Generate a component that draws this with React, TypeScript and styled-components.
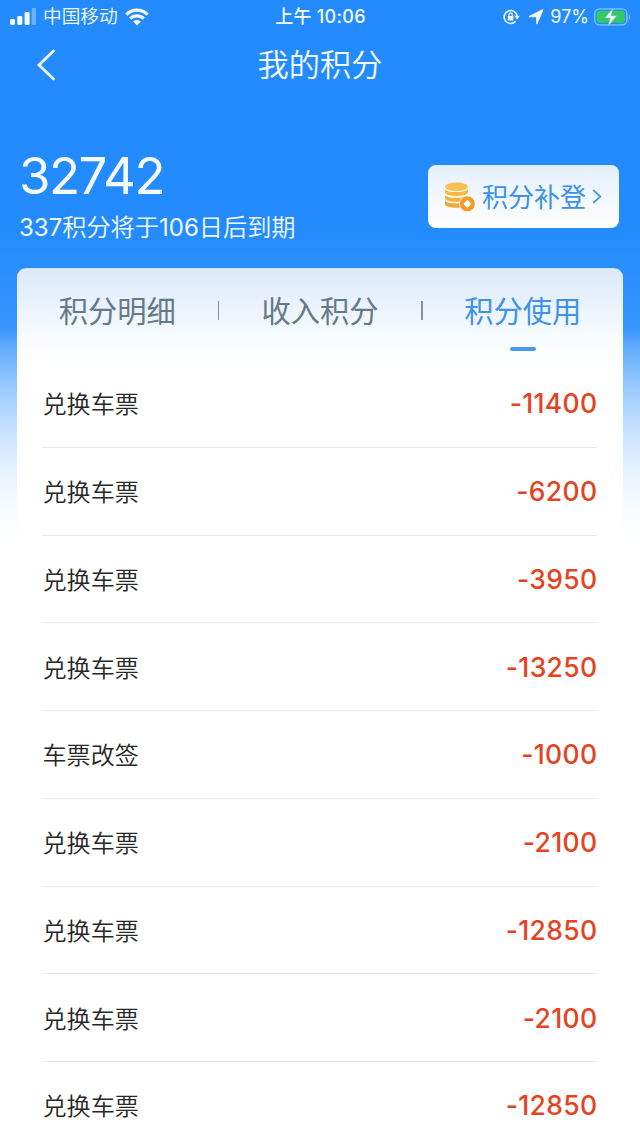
import React from 'react';
import styled, { createGlobalStyle } from 'styled-components';

const GlobalStyle = createGlobalStyle`
  * { box-sizing: border-box; }
  body {
    margin: 0;
    background: #fff;
    font-family: Inter, "Noto Sans CJK SC", sans-serif;
    overflow: hidden;
  }
`;

const Screen = styled.div`
  width: 640px;
  height: 1138px;
  overflow: hidden;
  display: flex;
  flex-direction: column;
  background: linear-gradient(
    180deg,
    #238bfd 0,
    #238bfd 225px,
    #2e91fe 290px,
    #3795fe 328px,
    #67affd 350px,
    #96c8fe 385px,
    #c3dffe 425px,
    #e6f2fe 470px,
    #f8fbff 510px,
    #fff 545px
  );
`;

const StatusBar = styled.header`
  height: 32px;
  flex: none;
  display: grid;
  grid-template-columns: 1fr auto 1fr;
  align-items: center;
  padding: 0 9px 0 10px;
  color: #f4fbff;
`;

const StatusGroup = styled.div<{ $end?: boolean }>`
  display: flex;
  align-items: center;
  height: 32px;
  justify-content: ${(p) => (p.$end ? 'flex-end' : 'flex-start')};
`;

const Carrier = styled.span`
  margin: 0 7px 0 7px;
  font-size: 18.7px;
  font-weight: 350;
  line-height: 32px;
  padding-top: 1px;
`;

const Clock = styled.div`
  font-size: 18px;
  font-weight: 500;
  line-height: 32px;
  padding-top: 1px;
  letter-spacing: 0.3px;
`;

const BatteryLevel = styled.span`
  margin: 0 5px 0 6px;
  font-size: 18px;
  font-weight: 400;
  line-height: 32px;
`;

const NavBar = styled.nav`
  height: 68px;
  flex: none;
  display: grid;
  grid-template-columns: 80px 1fr 80px;
  align-items: center;
  padding-bottom: 2px;
`;

const BackButton = styled.button`
  display: flex;
  padding: 0 0 0 36px;
  border: 0;
  background: none;
`;

const Title = styled.h1`
  margin: 0;
  text-align: center;
  color: #f4fbff;
  font-size: 31.2px;
  font-weight: 350;
  line-height: 46px;
`;

const Summary = styled.section`
  height: 168px;
  flex: none;
  display: flex;
  justify-content: space-between;
  align-items: flex-start;
  padding: 46px 21px 0 19px;
  color: #f4fbff;
`;

const Points = styled.div`
  font-size: 51px;
  line-height: 60px;
  letter-spacing: -1.5px;
`;

const Expiry = styled.div`
  margin-top: 4px;
  font-size: 24.2px;
  font-weight: 350;
  line-height: 36px;
`;

const Figure = styled.span`
  font-weight: 400;
  font-size: 24px;
`;

const ClaimButton = styled.button`
  width: 191px;
  height: 63px;
  margin-top: 19px;
  padding: 0 15px 0 16px;
  display: flex;
  align-items: center;
  border: 0;
  border-radius: 8px;
  background: linear-gradient(180deg, #e4effd, #fff);
  color: #3c92e8;
  font: 400 26px/38px Inter, "Noto Sans CJK SC", sans-serif;
`;

const ClaimLabel = styled.span`
  margin: 0 6px 0 6px;
  padding-top: 2px;
  white-space: nowrap;
`;

const Card = styled.main`
  flex: 1;
  margin: 0 17px;
  border-radius: 9px 9px 0 0;
  border-top: 1px solid #c9e6ff;
  background: linear-gradient(180deg, #dce9f9 0, #ecf4fd 42px, #fafdff 74px, #fff 100px);
`;

const Tabs = styled.div`
  height: 91px;
  display: grid;
  grid-template-columns: 200.5px 1.5px 202px 1.5px 200.5px;
  padding-top: 20px;
`;

const Tab = styled.div<{ $active?: boolean }>`
  display: flex;
  flex-direction: column;
  align-items: center;
  color: ${(p) => (p.$active ? '#3d93ed' : '#657986')};
  font-size: 29.3px;
  line-height: 46px;

  &::after {
    content: '';
    width: 26px;
    height: 4px;
    margin-top: 12px;
    border-radius: 2px;
    background: ${(p) => (p.$active ? '#4a99e6' : 'transparent')};
  }
`;

const Divider = styled.span`
  height: 19px;
  margin-top: 12px;
  background: #83919c;
`;

const List = styled.ul`
  margin: 0;
  padding: 0 26px 0 25px;
  list-style: none;
`;

const Row = styled.li`
  height: 87.75px;
  display: flex;
  align-items: center;
  justify-content: space-between;
  border-bottom: 1px solid #e8e8e8;
`;

const Name = styled.span`
  padding: 4px 0 0 0.5px;
  color: #282828;
  font-size: 24.1px;
  font-weight: 350;
  line-height: 36px;
`;

const Amount = styled.span`
  margin-right: -0.3px;
  color: #e5431f;
  font-size: 26.5px;
  font-weight: 500;
  line-height: 36px;
  letter-spacing: 0.3px;
`;

const records = [
  { name: '兑换车票', amount: -11400 },
  { name: '兑换车票', amount: -6200 },
  { name: '兑换车票', amount: -3950 },
  { name: '兑换车票', amount: -13250 },
  { name: '车票改签', amount: -1000 },
  { name: '兑换车票', amount: -2100 },
  { name: '兑换车票', amount: -12850 },
  { name: '兑换车票', amount: -2100 },
  { name: '兑换车票', amount: -12850 },
];

const SignalIcon = () => (
  <svg width="26" height="17" viewBox="0 0 26 17" fill="#f4fbff">
    <rect x="0" y="11" width="5" height="6" rx="1.4" />
    <rect x="7.3" y="8" width="5" height="9" rx="1.4" />
    <rect x="14.6" y="4" width="5" height="13" rx="1.4" />
    <rect x="21.6" y="0" width="4.6" height="17" rx="1.4" opacity="0.35" />
  </svg>
);

const WifiIcon = () => (
  <svg width="24" height="18" viewBox="0 0 24 18" fill="none" stroke="#f4fbff" strokeWidth="3.2">
    <path d="M1.4 6.6C7.3.7 16.7.7 22.6 6.6" />
    <path d="M5.3 10.7c3.8-3.7 9.6-3.7 13.4 0" />
    <path d="M12 17.5l-3.8-3.9c2.1-2 5.5-2 7.6 0z" fill="#f4fbff" stroke="none" />
  </svg>
);

const RotationLockIcon = () => (
  <svg width="17" height="16" viewBox="0 0 17 16" fill="none" stroke="#f4fbff" strokeWidth="1.6">
    <path d="M14.1 7A6.5 6.5 0 1 0 12.6 12.3" />
    <path d="M11.4 6.8h5.4L14.1 10.4z" fill="#f4fbff" stroke="none" />
    <rect x="4.8" y="7" width="5.6" height="4.5" rx="0.6" fill="#f4fbff" stroke="none" />
    <path d="M5.9 7.3V5.8a1.7 1.7 0 0 1 3.4 0v1.5" strokeWidth="1.2" />
  </svg>
);

const LocationIcon = styled.svg`
  margin-left: 8px;
`;

const BatteryIcon = () => (
  <svg width="37" height="20" viewBox="0 0 37 20">
    <rect x="0.8" y="1.8" width="32" height="16" rx="4.5" fill="none" stroke="#86c0f8" strokeWidth="1.3" />
    <rect x="2.8" y="3.8" width="28" height="12" rx="2.5" fill="#32cb63" />
    <path d="M34.8 7v6c1.9-.8 1.9-5.2 0-6z" fill="#86c0f8" />
    <path d="M19.5.8 10.7 11h5.5l-2.3 8.4L22.8 8.8h-5.6z" fill="#fff" stroke="#52b8b8" strokeWidth="0.6" />
  </svg>
);

const CoinsIcon = () => (
  <svg width="32" height="30" viewBox="0 0 32 30">
    <path d="M1 18.6c2 3.8 20 3.8 23 0v3.8c-3 4.4-21 4.4-23 0z" fill="#f1aa32" />
    <path d="M1 12.9c2 3.8 20 3.8 23 0v3.6c-3 4.4-21 4.4-23 0z" fill="#f5b239" />
    <path d="M1 7.2c2 3.8 20 3.8 23 0v3.6c-3 4.4-21 4.4-23 0z" fill="#f8b940" />
    <ellipse cx="12.5" cy="4.8" rx="11.5" ry="4.2" fill="#fac04c" />
    <circle cx="23.3" cy="21.8" r="7.9" fill="#f09c28" stroke="#f3f7fc" strokeWidth="0.8" />
    <path d="M23.3 18.6l3.2 3.2-3.2 3.2-3.2-3.2z" fill="#fff" stroke="#fff" strokeWidth="1.2" strokeLinejoin="round" />
  </svg>
);

export default function App() {
  return (
    <>
      <GlobalStyle />
      <Screen>
        <StatusBar>
          <StatusGroup>
            <SignalIcon />
            <Carrier>中国移动</Carrier>
            <WifiIcon />
          </StatusGroup>
          <Clock>上午 10:06</Clock>
          <StatusGroup $end>
            <RotationLockIcon />
            <LocationIcon width="16" height="16" viewBox="0 0 16 16" fill="#f4fbff">
              <path
                d="M14.7.8 8.9 14.6V7.6H1.5z"
                stroke="#f4fbff"
                strokeWidth="1.4"
                strokeLinejoin="round"
              />
            </LocationIcon>
            <BatteryLevel>97%</BatteryLevel>
            <BatteryIcon />
          </StatusGroup>
        </StatusBar>
        <NavBar>
          <BackButton aria-label="返回">
            <svg width="20" height="32" viewBox="0 0 20 32" fill="none" stroke="#f4fbff" strokeWidth="2.8" strokeLinecap="round">
              <path d="M17.5 2 3 16l14.5 14" />
            </svg>
          </BackButton>
          <Title>我的积分</Title>
        </NavBar>
        <Summary>
          <div>
            <Points>32742</Points>
            <Expiry>
              <Figure>337</Figure>积分将于<Figure>106</Figure>日后到期
            </Expiry>
          </div>
          <ClaimButton>
            <CoinsIcon />
            <ClaimLabel>积分补登</ClaimLabel>
            <svg width="10" height="15" viewBox="0 0 10 15" fill="none" stroke="#4c97dc" strokeWidth="1.7">
              <path d="M1.2 1 8.4 7.5 1.2 14" />
            </svg>
          </ClaimButton>
        </Summary>
        <Card>
          <Tabs>
            <Tab>积分明细</Tab>
            <Divider />
            <Tab>收入积分</Tab>
            <Divider />
            <Tab $active>积分使用</Tab>
          </Tabs>
          <List>
            {records.map((r, i) => (
              <Row key={i}>
                <Name>{r.name}</Name>
                <Amount>{r.amount}</Amount>
              </Row>
            ))}
          </List>
        </Card>
      </Screen>
    </>
  );
}
